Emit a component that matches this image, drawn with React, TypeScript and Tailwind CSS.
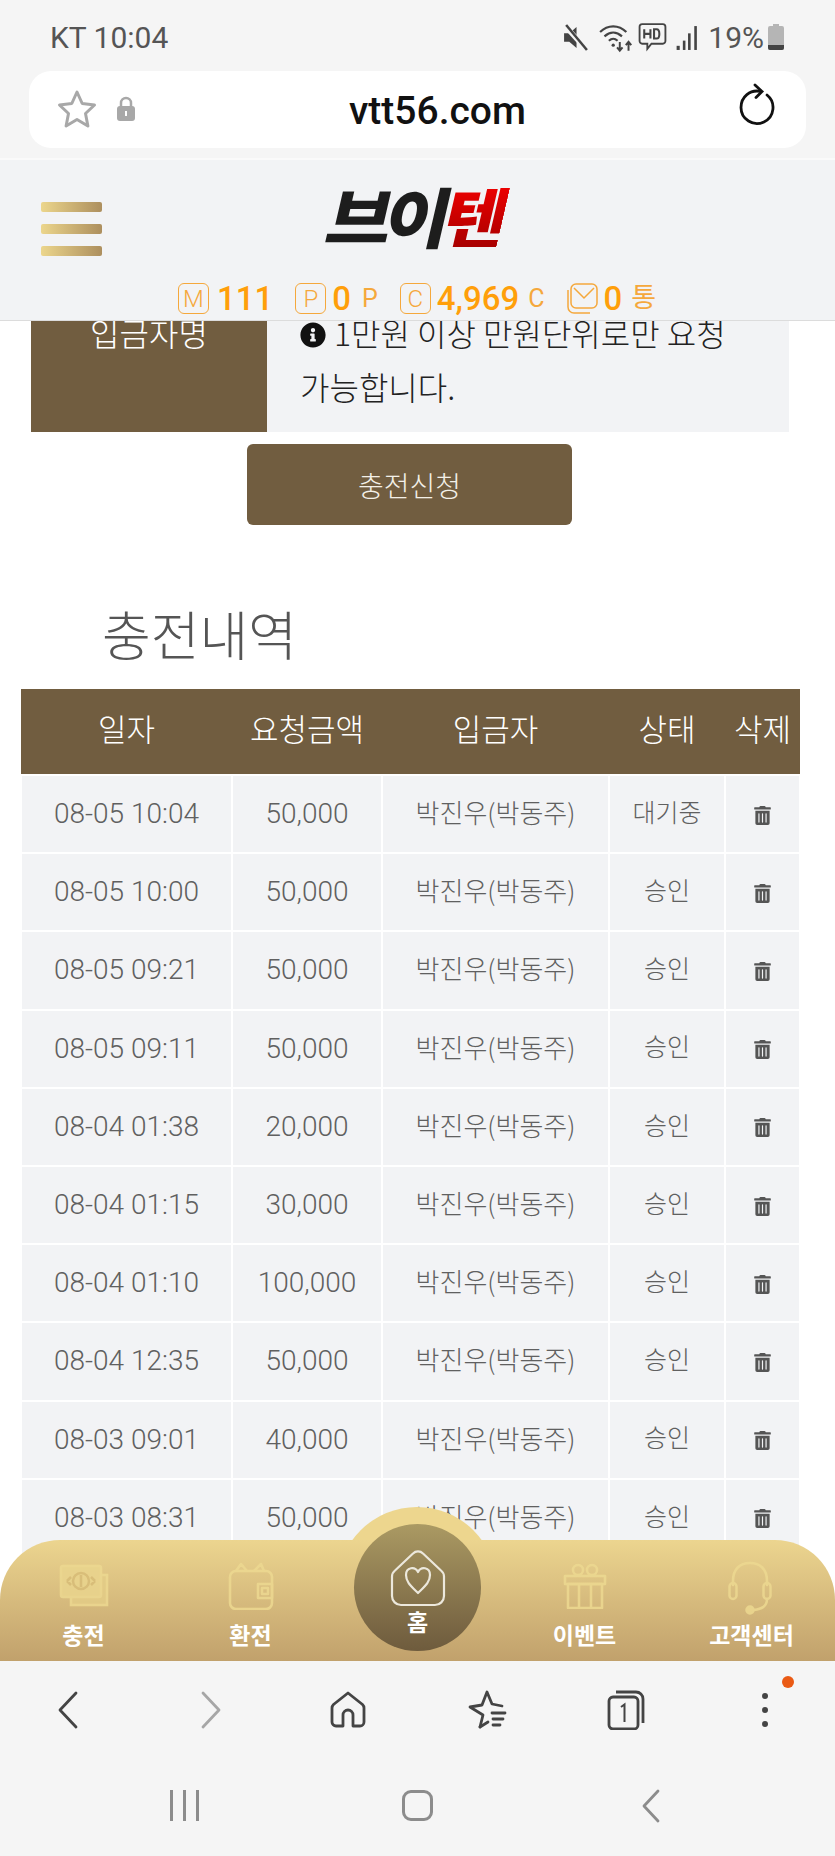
import { type ReactElement, type ReactNode } from 'react';
import { FaInfoCircle, FaTrashAlt } from 'react-icons/fa';

const rows = [
  { date: '08-05 10:04', amount: '50,000', status: '대기중' },
  { date: '08-05 10:00', amount: '50,000', status: '승인' },
  { date: '08-05 09:21', amount: '50,000', status: '승인' },
  { date: '08-05 09:11', amount: '50,000', status: '승인' },
  { date: '08-04 01:38', amount: '20,000', status: '승인' },
  { date: '08-04 01:15', amount: '30,000', status: '승인' },
  { date: '08-04 01:10', amount: '100,000', status: '승인' },
  { date: '08-04 12:35', amount: '50,000', status: '승인' },
  { date: '08-03 09:01', amount: '40,000', status: '승인' },
  { date: '08-03 08:31', amount: '50,000', status: '승인' },
];

function StatusBar() {
  return (
    <div className="h-[71px] flex items-center justify-between pl-[50px] pr-[50px] pt-[3px] text-[30px] text-[#555] font-['Roboto',sans-serif]">
      <span>KT 10:04</span>
      <div className="flex items-center">
        {/* muted */}
        <svg width="27" height="27" viewBox="0 0 26 26" className="mr-[10px]">
          <path d="M2 9h5l7-6v20l-7-6H2z" fill="#444" />
          <path d="M3 2l21 23" stroke="#f5f5f5" strokeWidth="5" />
          <path d="M4 1l20 24" stroke="#444" strokeWidth="2.4" />
        </svg>
        {/* wifi */}
        <svg width="35" height="31" viewBox="0 0 32 28" fill="none" stroke="#444" strokeWidth="2" className="mr-[4px]">
          <path d="M1 9c7-7 17-7 24 0" />
          <path d="M5 13c5-4.500 11-4.500 16 0" />
          <path d="M9 17c3-2.500 5-2.500 8 0" />
          <path d="M19 18v8M16.500 23l2.500 3 2.500-3" strokeWidth="1.800" />
          <path d="M27 26v-8M24.500 21l2.500-3 2.500 3" strokeWidth="1.800" />
          <circle cx="13" cy="21" r="1.500" fill="#444" stroke="none" />
        </svg>
        {/* HD bubble */}
        <svg width="29" height="31" viewBox="0 0 28 30" fill="none" className="mr-[8px]">
          <path d="M4 2h20a2.500 2.500 0 0 1 2.500 2.500v14A2.500 2.500 0 0 1 24 21H13l-4 5v-5H4a2.500 2.500 0 0 1-2.500-2.500v-14A2.500 2.500 0 0 1 4 2z" stroke="#444" strokeWidth="1.800" />
          <path d="M6 7v9M12 7v9M6 11.500h6" stroke="#444" strokeWidth="2" />
          <path d="M15.500 7v9h2.500c3.500 0 3.500-9 0-9z" stroke="#444" strokeWidth="2" />
        </svg>
        {/* signal */}
        <svg width="24" height="27" viewBox="0 0 22 26" fill="#444" className="mr-[9px]">
          <rect x="1" y="21" width="3" height="4" />
          <rect x="7" y="16" width="2.500" height="9" />
          <rect x="12" y="9" width="2.500" height="16" />
          <rect x="18" y="2" width="2.500" height="23" />
        </svg>
        <span>19%</span>
        {/* battery */}
        <svg width="18" height="26" viewBox="0 0 18 26" className="ml-[3px]">
          <path d="M6 0h6v2h3a2 2 0 0 1 2 2v20a2 2 0 0 1-2 2H3a2 2 0 0 1-2-2V4a2 2 0 0 1 2-2h3z" fill="#b5b5b5" />
          <path d="M1 21h16v3a2 2 0 0 1-2 2H3a2 2 0 0 1-2-2z" fill="#444" />
        </svg>
      </div>
    </div>
  );
}

function UrlBar() {
  return (
    <div className="px-[29px] h-[87px]">
      <div className="relative h-[77px] bg-white rounded-[22px] flex items-center justify-center">
        <div className="absolute left-[28px] top-[18px] flex items-center gap-[19px]">
          <svg width="40" height="40" viewBox="0 0 40 40" fill="none" stroke="#a8a8a8" strokeWidth="3" strokeLinejoin="round">
            <path d="M20 3l5.200 11.500 12.300 1.500-9 8.500 2.400 12.500L20 30.500 9.100 37l2.400-12.500-9-8.500 12.300-1.500z" />
          </svg>
          <svg width="20" height="26" viewBox="0 0 20 26">
            <path d="M5 11V7a5 5 0 0 1 10 0v4" fill="none" stroke="#a8a8a8" strokeWidth="2.500" />
            <rect x="1" y="10" width="18" height="15" rx="3" fill="#a8a8a8" />
            <rect x="9" y="15" width="2" height="5" fill="#fff" />
          </svg>
        </div>
        <span className="ml-[40px] mt-[4px] text-[39px] font-medium text-[#111] font-['Roboto',sans-serif]">vtt56.com</span>
        <svg width="38" height="44" viewBox="0 0 38 44" fill="none" stroke="#111" strokeWidth="2.800" strokeLinecap="round" className="absolute right-[30px] top-[12px]">
          <path d="M23 8.500C12 6 3 14 3 24.500a16 16 0 1 0 26-12.500" />
          <path d="M17 2l7 6.500-6 6" />
        </svg>
      </div>
    </div>
  );
}

function BoxLetter({ children, className = '' }: { children: ReactNode; className?: string }) {
  return (
    <span className={`w-[31px] h-[31px] border-[1.5px] border-[#f5a83c] rounded-[6px] flex items-center justify-center text-[24px] font-light text-[#f5a83c] font-['Roboto',sans-serif] ${className}`}>
      {children}
    </span>
  );
}

function Header() {
  return (
    <header className="relative z-10 h-[163px] bg-[#f2f3f5] border-b border-[#dcdcdc] border-t-2 border-t-[#fafafa]">
      <div className="h-[122px] flex items-start">
        <div className="ml-[41px] mt-[42px] flex flex-col gap-[12px] w-[61px]">
          <div className="h-[10px] rounded-[2px] bg-gradient-to-r from-[#ecd68c] to-[#ad8f5e]" />
          <div className="h-[10px] rounded-[2px] bg-gradient-to-r from-[#ecd68c] to-[#ad8f5e]" />
          <div className="h-[10px] rounded-[2px] bg-gradient-to-r from-[#ecd68c] to-[#ad8f5e]" />
        </div>
        <div className="ml-[227px] mt-[9px] h-[90px] flex items-center -skew-x-12 text-[71px] font-black tracking-[-7px] leading-none font-['Noto_Sans_CJK_KR',sans-serif] scale-y-[0.92]">
          <span className="text-[#1d1d1d]">브이</span>
          <span className="bg-gradient-to-b from-[#f20000] to-[#a80000] bg-clip-text text-transparent">텐</span>
        </div>
      </div>
      <div className="ml-[178px] flex items-center text-[#ff9f0a] font-['Roboto','Noto_Sans_CJK_KR',sans-serif] font-medium text-[33px] leading-none">
        <BoxLetter>M</BoxLetter>
        <span className="ml-[8px]">111</span>
        <BoxLetter className="ml-[22px]">P</BoxLetter>
        <span className="ml-[6px]">0</span>
        <span className="ml-[11px] text-[25px] font-normal text-[#f5a83c]">P</span>
        <BoxLetter className="ml-[22px]">C</BoxLetter>
        <span className="ml-[6px]">4,969</span>
        <span className="ml-[9px] text-[25px] font-normal text-[#f5a83c]">C</span>
        <svg width="31" height="31" viewBox="0 0 31 31" fill="none" stroke="#f5a83c" strokeWidth="1.500" className="ml-[22px]">
          <rect x="4" y="1" width="26" height="24" rx="5" />
          <path d="M7 5l10 10 10-10" />
          <path d="M1 7v17a6 6 0 0 0 6 6h16" />
        </svg>
        <span className="ml-[6px]">0</span>
        <span className="ml-[9px] text-[27px] font-normal text-[#f5a83c]">통</span>
      </div>
    </header>
  );
}

function DepositForm() {
  return (
    <div className="relative -mt-[16px] mx-[31px] w-[758px] flex bg-[#f2f3f5]">
      <div className="w-[236px] h-[127px] bg-[#715d40] text-white text-center text-[32px] leading-[54px] font-light">입금자명</div>
      <div className="pl-[33px] text-[32px] leading-[54px] text-[#222] font-light whitespace-nowrap">
        <FaInfoCircle className="inline-block text-[#111] text-[26px] mr-[8px] align-[-2px]" />
        1만원 이상 만원단위로만 요청
        <br />
        가능합니다.
      </div>
    </div>
  );
}

function History() {
  return (
    <section>
      <div className="flex justify-center mt-[12px]">
        <button className="ml-[-16px] w-[325px] h-[81px] bg-[#715d40] rounded-[6px] text-[28px] text-[#f3f0e8] font-light">충전신청</button>
      </div>
      <h2 className="mt-[72px] ml-[102px] text-[53px] leading-[72px] text-[#555] font-light">충전내역</h2>
      <table className="mt-[20px] ml-[20px] w-[779px] table-fixed border-collapse text-center">
        <colgroup>
          <col className="w-[211px]" />
          <col className="w-[150px]" />
          <col className="w-[227px]" />
          <col className="w-[116px]" />
          <col className="w-[75px]" />
        </colgroup>
        <thead>
          <tr className="h-[86px] bg-[#715d40] text-white text-[31px]">
            <th className="font-light pb-[7px]">일자</th>
            <th className="font-light pb-[7px]">요청금액</th>
            <th className="font-light pb-[7px]">입금자</th>
            <th className="font-light pb-[7px]">상태</th>
            <th className="font-light pb-[7px] whitespace-nowrap">삭제</th>
          </tr>
        </thead>
        <tbody>
          {rows.map((row) => (
            <tr key={row.date} className="h-[78.2px] bg-[#f2f3f5] text-[25px] text-[#606060] font-light">
              <td className="border-2 border-white text-[28px] font-['Roboto',sans-serif]">{row.date}</td>
              <td className="border-2 border-white text-[28px] font-['Roboto',sans-serif]">{row.amount}</td>
              <td className="border-2 border-white pb-[5px] text-[26px]">박진우(박동주)</td>
              <td className="border-2 border-white pb-[5px]">{row.status}</td>
              <td className="border-2 border-white pb-[5px]">
                <FaTrashAlt className="inline-block text-[#555] text-[19px]" />
              </td>
            </tr>
          ))}
        </tbody>
      </table>
    </section>
  );
}

function MoneyIcon() {
  return (
    <svg width="50" height="50" viewBox="0 0 50 50" fill="none" stroke="#edd991" strokeWidth="2.500" className="opacity-85">
      <path d="M42 14h6v30H12v-8" fill="#e4cd87" />
      <rect x="2" y="5" width="40" height="31" rx="2" fill="#ead58e" />
      <circle cx="22" cy="20" r="8" stroke="#d8bd78" />
      <path d="M22 14v12M8 20l4-4M8 20l4 4M36 20l-4-4M36 20l-4 4" stroke="#d8bd78" />
    </svg>
  );
}

function WalletIcon() {
  return (
    <svg width="46" height="48" viewBox="0 0 46 48" fill="none" stroke="#edd991" strokeWidth="2.500" strokeLinejoin="round" className="opacity-85">
      <rect x="2" y="9" width="42" height="38" rx="6" />
      <path d="M8 9l5-7 6 7M26 9l7-7 3 7" />
      <rect x="30" y="22" width="14" height="14" />
      <rect x="34" y="26" width="6" height="6" />
    </svg>
  );
}

function GiftIcon() {
  return (
    <svg width="44" height="46" viewBox="0 0 44 46" fill="none" stroke="#edd991" strokeWidth="2.500" strokeLinejoin="round" className="opacity-85">
      <circle cx="15" cy="7" r="5" />
      <circle cx="29" cy="7" r="5" />
      <rect x="2" y="13" width="40" height="8" />
      <rect x="5" y="21" width="34" height="24" />
      <path d="M16 21v24M28 21v24" />
    </svg>
  );
}

function HeadsetIcon() {
  return (
    <svg width="44" height="54" viewBox="0 0 44 54" fill="none" stroke="#edd991" strokeWidth="2.500" strokeLinecap="round" className="opacity-85 -ml-[3px] mt-[3px]">
      <path d="M5 24v-4C5 8 12 2 22 2s17 6 17 18v4" />
      <rect x="1.500" y="22" width="7" height="16" rx="3.500" />
      <rect x="35.500" y="22" width="7" height="16" rx="3.500" />
      <path d="M39 38c0 8-6 10-13 11" />
      <circle cx="22" cy="49" r="3.500" fill="#edd991" />
    </svg>
  );
}

function NavItem({ icon, label }: { icon: ReactNode; label: string }) {
  return (
    <div className="flex flex-col items-center">
      <div className="h-[56px] flex items-center justify-center">{icon}</div>
      <span className="mt-[3px] text-[23px] leading-[34px] font-bold text-white whitespace-nowrap">{label}</span>
    </div>
  );
}

function BottomNav() {
  return (
    <nav className="absolute left-0 right-0 bottom-[195px] h-[154px]">
      <div className="absolute left-[337px] top-0 w-[160px] h-[80px] rounded-t-full bg-[#edd68e]" />
      <div className="absolute left-0 right-0 bottom-0 h-[121px] rounded-t-[60px] bg-gradient-to-b from-[#ecd58f] to-[#c1a16c] grid grid-cols-5 pt-[18px]">
        <NavItem icon={<MoneyIcon />} label="충전" />
        <NavItem icon={<WalletIcon />} label="환전" />
        <div />
        <NavItem icon={<GiftIcon />} label="이벤트" />
        <NavItem icon={<HeadsetIcon />} label="고객센터" />
      </div>
      <div className="absolute left-[354px] top-[17px] w-[127px] h-[127px] rounded-full bg-gradient-to-b from-[#ab9a63] to-[#6e5b3d] flex flex-col items-center pt-[26px]">
        <svg width="58" height="58" viewBox="0 0 58 58" fill="none" stroke="#ece8dc" strokeWidth="2.200" strokeLinejoin="round">
          <path d="M24 3.500a7 7 0 0 1 10 0l18 17a8 8 0 0 1 3 6V46a9 9 0 0 1-9 9H12a9 9 0 0 1-9-9V26.500a8 8 0 0 1 3-6z" />
          <path d="M29 43C22 36 17 32 17 25c0-8 9-9 12-3 3-6 12-5 12 3 0 7-5 11-12 18z" />
        </svg>
        <span className="-mt-[1px] text-[23px] leading-[28px] font-bold text-white">홈</span>
      </div>
    </nav>
  );
}

function BrowserNav() {
  return (
    <div className="h-[97px] grid grid-cols-6 w-[834px] items-center pt-[1px]">
      <div className="flex justify-center pr-[4px]">
        <svg width="22" height="38" viewBox="0 0 22 38" fill="none" stroke="#444" strokeWidth="2.800" strokeLinecap="round" strokeLinejoin="round">
          <path d="M19 2L3 19l16 17" />
        </svg>
      </div>
      <div className="flex justify-center pl-[4px]">
        <svg width="22" height="38" viewBox="0 0 22 38" fill="none" stroke="#a6a6a6" strokeWidth="2.800" strokeLinecap="round" strokeLinejoin="round">
          <path d="M3 2l16 17L3 36" />
        </svg>
      </div>
      <div className="flex justify-center">
        <svg width="36" height="38" viewBox="0 0 36 38" fill="none" stroke="#444" strokeWidth="2.800" strokeLinejoin="round">
          <path d="M13 35H6a4 4 0 0 1-4-4V17a5 5 0 0 1 1.500-3.500L18 2l14.500 11.500A5 5 0 0 1 34 17v14a4 4 0 0 1-4 4h-7V24a5 5 0 0 0-10 0z" />
        </svg>
      </div>
      <div className="flex justify-center">
        <svg width="40" height="40" viewBox="0 0 40 40" fill="none" stroke="#444" strokeWidth="2.800" strokeLinejoin="round" strokeLinecap="round">
          <path d="M13 37l3-12-13-8 12-2 5-13 5 12 10 2" />
          <path d="M13 37l8-5" />
          <path d="M25 23h13M26 29h10M26 35h7" />
        </svg>
      </div>
      <div className="flex justify-center relative">
        <svg width="38" height="40" viewBox="0 0 38 40" fill="none" stroke="#444" strokeWidth="2.800">
          <rect x="2" y="7" width="29" height="32" rx="4" />
          <path d="M9 2h20a7 7 0 0 1 7 7v24" />
          <path d="M14 17l3.500-2.500V32" strokeWidth="2" />
        </svg>
      </div>
      <div className="relative flex flex-col items-center gap-[8px]">
        <span className="w-[6px] h-[6px] rounded-full bg-[#444]" />
        <span className="w-[6px] h-[6px] rounded-full bg-[#444]" />
        <span className="w-[6px] h-[6px] rounded-full bg-[#444]" />
        <span className="absolute left-[87px] -top-[17px] w-[12px] h-[12px] rounded-full bg-[#ea5a14]" />
      </div>
    </div>
  );
}

function SystemNav() {
  return (
    <div className="h-[98px] grid grid-cols-3 px-[68px] items-center pb-[3px]">
      <div className="flex justify-center gap-[10px]">
        <span className="w-[3px] h-[31px] bg-[#8c8c8c]" />
        <span className="w-[3px] h-[31px] bg-[#8c8c8c]" />
        <span className="w-[3px] h-[31px] bg-[#8c8c8c]" />
      </div>
      <div className="flex justify-center">
        <span className="w-[31px] h-[31px] border-[3px] border-[#8c8c8c] rounded-[9px]" />
      </div>
      <div className="flex justify-center">
        <svg width="20" height="34" viewBox="0 0 20 34" fill="none" stroke="#8c8c8c" strokeWidth="2.800" strokeLinecap="round" strokeLinejoin="round">
          <path d="M17 2L3 17l14 15" />
        </svg>
      </div>
    </div>
  );
}

export default function App(): ReactElement {
  return (
    <div className="relative w-[835px] h-[1856px] overflow-hidden flex flex-col bg-[#f5f5f5] font-['Noto_Sans_CJK_KR',sans-serif]">
      <StatusBar />
      <UrlBar />
      <Header />
      <main className="h-[1340px] bg-white">
        <DepositForm />
        <History />
      </main>
      <BottomNav />
      <BrowserNav />
      <SystemNav />
    </div>
  );
}
